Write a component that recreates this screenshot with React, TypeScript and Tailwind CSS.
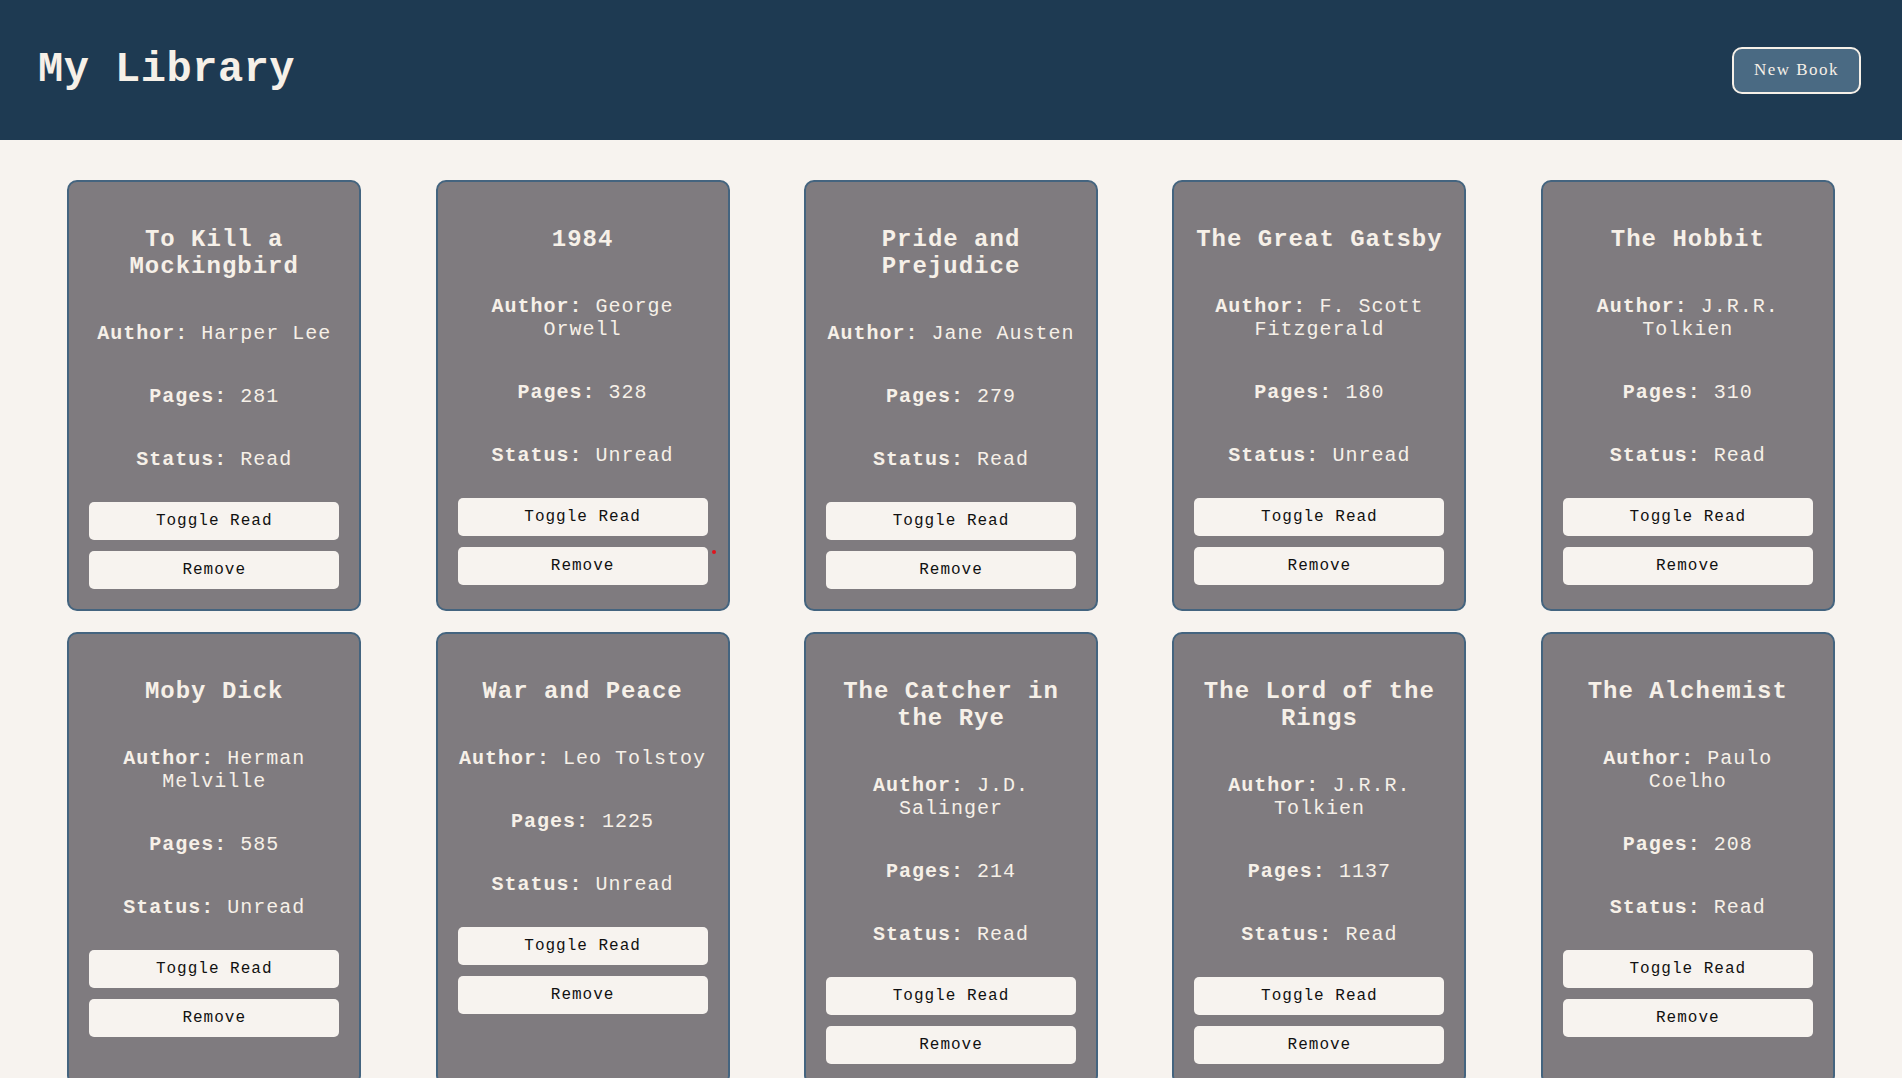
import { useState } from 'react';

type Book = {
  title: string;
  author: string;
  pages: number;
  read: boolean;
};

const initialBooks: Book[] = [
  { title: 'To Kill a Mockingbird', author: 'Harper Lee', pages: 281, read: true },
  { title: '1984', author: 'George Orwell', pages: 328, read: false },
  { title: 'Pride and Prejudice', author: 'Jane Austen', pages: 279, read: true },
  { title: 'The Great Gatsby', author: 'F. Scott Fitzgerald', pages: 180, read: false },
  { title: 'The Hobbit', author: 'J.R.R. Tolkien', pages: 310, read: true },
  { title: 'Moby Dick', author: 'Herman Melville', pages: 585, read: false },
  { title: 'War and Peace', author: 'Leo Tolstoy', pages: 1225, read: false },
  { title: 'The Catcher in the Rye', author: 'J.D. Salinger', pages: 214, read: true },
  { title: 'The Lord of the Rings', author: 'J.R.R. Tolkien', pages: 1137, read: true },
  { title: 'The Alchemist', author: 'Paulo Coelho', pages: 208, read: true },
];

const BookCard = ({
  book,
  marked,
  onToggle,
  onRemove,
}: {
  book: Book;
  marked?: boolean;
  onToggle: () => void;
  onRemove: () => void;
}) => (
  <div className="relative w-[294px] flex flex-col px-5 pt-5 pb-5 bg-[#7f7b7f] border-2 border-[#44647f] rounded-[10px] text-center text-[#f6f0e8]">
    <h2 className="mt-[24px] text-[24px] leading-[27px] font-bold tracking-[1px]">{book.title}</h2>
    <p className="mt-[42px] text-[20px] leading-[23px] tracking-[1px]">
      <strong>Author:</strong> {book.author}
    </p>
    <p className="mt-[40px] text-[20px] leading-[23px] tracking-[1px]">
      <strong>Pages:</strong> {book.pages}
    </p>
    <p className="mt-[40px] text-[20px] leading-[23px] tracking-[1px]">
      <strong>Status:</strong> {book.read ? 'Read' : 'Unread'}
    </p>
    <div className="mt-[31px] flex flex-col gap-[11px]">
      <button
        onClick={onToggle}
        className="h-[38px] w-full rounded-[5px] bg-[#f7f3ef] text-[#111] text-[16px] tracking-[1px]"
      >
        Toggle Read
      </button>
      <button
        onClick={onRemove}
        className="h-[38px] w-full rounded-[5px] bg-[#f7f3ef] text-[#111] text-[16px] tracking-[1px]"
      >
        Remove
      </button>
    </div>
    {marked && <span className="absolute left-[274px] top-[368px] w-[4px] h-[4px] rounded-full bg-[#e0141e]"></span>}
  </div>
);

export default function App() {
  const [books, setBooks] = useState<Book[]>(initialBooks);

  const toggleRead = (i: number) =>
    setBooks(books.map((b, idx) => (idx === i ? { ...b, read: !b.read } : b)));

  const removeBook = (i: number) => setBooks(books.filter((_, idx) => idx !== i));

  return (
    <div className="min-h-screen bg-[#f7f3ef] font-['Liberation_Mono',monospace]">
      <header className="h-[140px] bg-[#1e3a52] flex items-center justify-between pl-[38px] pr-[41px]">
        <h1 className="text-[42px] leading-[48px] font-bold tracking-[0.5px] text-[#f6f0e8]">My Library</h1>
        <button className="w-[129px] h-[47px] border-2 border-[#f6f0e8] rounded-[10px] bg-[#4a6a83] text-[#f6f0e8] font-['Liberation_Serif',serif] text-[17px] tracking-[1.5px]">
          New Book
        </button>
      </header>

      <main className="grid grid-cols-5 gap-x-5 gap-y-[21px] p-10 justify-items-center">
        {books.map((book, i) => (
          <BookCard
            key={book.title}
            book={book}
            marked={i === 1}
            onToggle={() => toggleRead(i)}
            onRemove={() => removeBook(i)}
          />
        ))}
      </main>
    </div>
  );
}
